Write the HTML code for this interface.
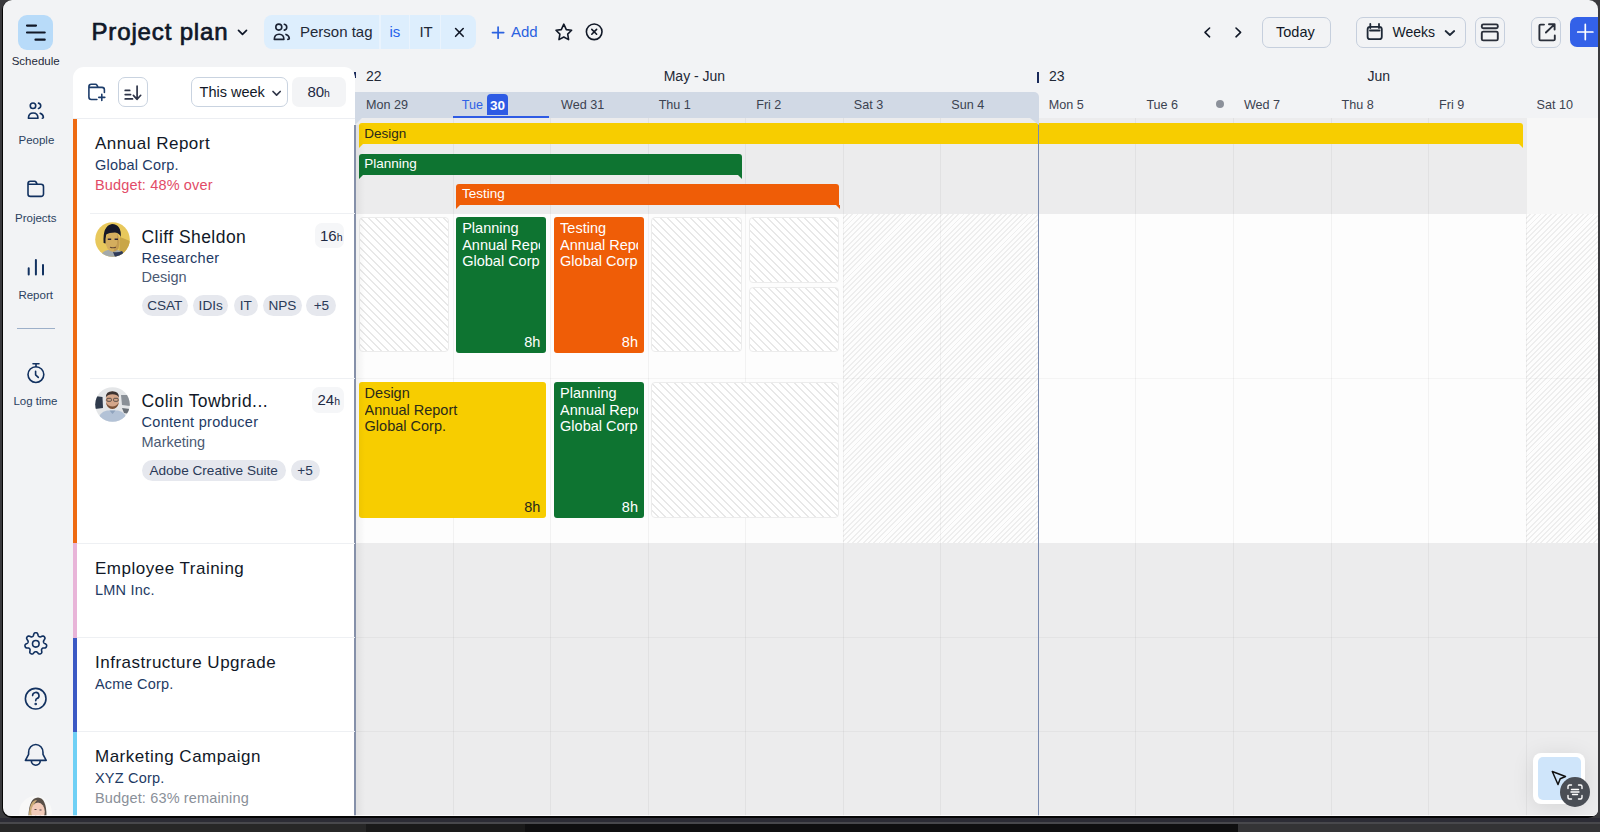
<!DOCTYPE html><html><head><meta charset="utf-8"><style>
*{margin:0;padding:0;box-sizing:border-box}
html,body{width:1600px;height:832px;overflow:hidden;background:#2c2c2e;font-family:"Liberation Sans", sans-serif}
.abs{position:absolute}
#frame{position:absolute;left:3px;top:0;width:1594.5px;height:816px;background:#f2f3f5;border-radius:9px 9px 6px 8px;overflow:hidden}
.t{position:absolute;white-space:nowrap;line-height:1}
</style></head><body><div class="abs" style="left:0;top:0;width:1600px;height:832px;background:#3a3a3d"></div>
<div class="abs" style="left:2px;top:0;width:1596px;height:818px;background:#050505;border-radius:10px"></div>
<div class="abs" style="left:0;top:818px;width:1600px;height:4px;background:#2c2c35"></div>
<div class="abs" style="left:0;top:822px;width:1600px;height:2px;background:#48484c"></div>
<div class="abs" style="left:0;top:824px;width:366px;height:8px;background:#272727"></div>
<div class="abs" style="left:366px;top:824px;width:159px;height:8px;background:#1a1a1a"></div>
<div class="abs" style="left:525px;top:824px;width:713px;height:8px;background:#0f0f10"></div>
<div class="abs" style="left:1238px;top:824px;width:362px;height:8px;background:#343436"></div>
<div id="frame">
<div class="abs" style="left:-3px;top:0;width:1600px;height:816px">
<div class="abs" style="left:355px;top:118px;width:1245px;height:95.5px;background:#ececed"></div>
<div class="abs" style="left:355px;top:213.5px;width:1245px;height:164.5px;background:#fdfdfd"></div>
<div class="abs" style="left:355px;top:378px;width:1245px;height:165px;background:#fdfdfd"></div>
<div class="abs" style="left:355px;top:543px;width:1245px;height:94.5px;background:#ececed"></div>
<div class="abs" style="left:355px;top:637.5px;width:1245px;height:94.0px;background:#ececed"></div>
<div class="abs" style="left:355px;top:731.5px;width:1245px;height:84.5px;background:#ececed"></div>
<div class="abs" style="left:1526.1px;top:118px;width:80px;height:95.5px;background:#f7f7f7"></div>
<div class="abs" style="left:843.25px;top:213.5px;width:195.0999999999999px;height:329.5px;background:repeating-linear-gradient(135deg, transparent 0 2.4px, #eeeeee 2.4px 3.75px)"></div>
<div class="abs" style="left:1526.1px;top:213.5px;width:73.90000000000009px;height:329.5px;background:repeating-linear-gradient(135deg, transparent 0 2.4px, #eeeeee 2.4px 3.75px)"></div>
<div class="abs" style="left:452.55px;top:118px;width:1px;height:698px;background:rgba(0,0,0,0.045)"></div>
<div class="abs" style="left:550.1px;top:118px;width:1px;height:698px;background:rgba(0,0,0,0.045)"></div>
<div class="abs" style="left:647.65px;top:118px;width:1px;height:698px;background:rgba(0,0,0,0.045)"></div>
<div class="abs" style="left:745.2px;top:118px;width:1px;height:698px;background:rgba(0,0,0,0.045)"></div>
<div class="abs" style="left:842.75px;top:118px;width:1px;height:698px;background:rgba(0,0,0,0.045)"></div>
<div class="abs" style="left:940.3px;top:118px;width:1px;height:698px;background:rgba(0,0,0,0.045)"></div>
<div class="abs" style="left:1037.85px;top:118px;width:1px;height:698px;background:rgba(0,0,0,0.045)"></div>
<div class="abs" style="left:1135.4px;top:118px;width:1px;height:698px;background:rgba(0,0,0,0.045)"></div>
<div class="abs" style="left:1232.9499999999998px;top:118px;width:1px;height:698px;background:rgba(0,0,0,0.045)"></div>
<div class="abs" style="left:1330.5px;top:118px;width:1px;height:698px;background:rgba(0,0,0,0.045)"></div>
<div class="abs" style="left:1428.05px;top:118px;width:1px;height:698px;background:rgba(0,0,0,0.045)"></div>
<div class="abs" style="left:1525.6px;top:118px;width:1px;height:698px;background:rgba(0,0,0,0.045)"></div>
<div class="abs" style="left:355px;top:377.5px;width:1245px;height:1px;background:rgba(0,0,0,0.035)"></div>
<div class="abs" style="left:355px;top:637.0px;width:1245px;height:1px;background:rgba(0,0,0,0.035)"></div>
<div class="abs" style="left:355px;top:731.0px;width:1245px;height:1px;background:rgba(0,0,0,0.035)"></div>
<div class="abs" style="left:358.7px;top:123.4px;width:1164.3px;height:21px;background:#f7cd00;border-radius:3px 3px 0 0"></div>
<div class="abs" style="left:358.7px;top:144.4px;width:0;height:0;border-top:4px solid #f7cd00;border-right:4px solid transparent"></div>
<div class="abs" style="left:1519px;top:144.4px;width:0;height:0;border-top:4px solid #f7cd00;border-left:4px solid transparent"></div>
<div class="t" style="left:364.2px;top:126.7px;font-size:13.5px;color:#2a2a1a">Design</div>
<div class="abs" style="left:358.7px;top:153.7px;width:382.90000000000003px;height:21px;background:#0e7431;border-radius:3px 3px 0 0"></div>
<div class="abs" style="left:358.7px;top:174.7px;width:0;height:0;border-top:4px solid #0e7431;border-right:4px solid transparent"></div>
<div class="abs" style="left:737.6px;top:174.7px;width:0;height:0;border-top:4px solid #0e7431;border-left:4px solid transparent"></div>
<div class="t" style="left:364.2px;top:157.0px;font-size:13.5px;color:#ffffff">Planning</div>
<div class="abs" style="left:456.4px;top:184.1px;width:383.1px;height:21px;background:#ef5d07;border-radius:3px 3px 0 0"></div>
<div class="abs" style="left:456.4px;top:205.1px;width:0;height:0;border-top:4px solid #ef5d07;border-right:4px solid transparent"></div>
<div class="abs" style="left:835.5px;top:205.1px;width:0;height:0;border-top:4px solid #ef5d07;border-left:4px solid transparent"></div>
<div class="t" style="left:461.9px;top:187.4px;font-size:13.5px;color:#ffffff">Testing</div>
<div class="abs" style="left:358.6px;top:217px;width:90.89999999999998px;height:135.2px;border:1px solid #ececec;border-radius:4px;background:repeating-linear-gradient(45deg, transparent 0 3.8px, #e8e8e8 3.8px 5.3px),#fff"></div>
<div class="abs" style="left:651.2px;top:217px;width:90.5px;height:135.2px;border:1px solid #ececec;border-radius:4px;background:repeating-linear-gradient(45deg, transparent 0 3.8px, #e8e8e8 3.8px 5.3px),#fff"></div>
<div class="abs" style="left:749.3px;top:217px;width:89.90000000000009px;height:65.5px;border:1px solid #ececec;border-radius:4px;background:repeating-linear-gradient(45deg, transparent 0 3.8px, #e8e8e8 3.8px 5.3px),#fff"></div>
<div class="abs" style="left:749.3px;top:286.6px;width:89.90000000000009px;height:65.59999999999997px;border:1px solid #ececec;border-radius:4px;background:repeating-linear-gradient(45deg, transparent 0 3.8px, #e8e8e8 3.8px 5.3px),#fff"></div>
<div class="abs" style="left:651.2px;top:382px;width:188.0px;height:135.79999999999995px;border:1px solid #ececec;border-radius:4px;background:repeating-linear-gradient(45deg, transparent 0 3.8px, #e8e8e8 3.8px 5.3px),#fff"></div>
<div class="abs" style="left:456.2px;top:217px;width:90.19999999999999px;height:135.60000000000002px;background:#0e7431;border-radius:3px;overflow:hidden">
<div class="abs" style="left:6px;top:3px;right:6px;overflow:hidden;font-size:14.5px;line-height:16.5px;color:#ffffff;white-space:nowrap">Planning<br>Annual Report<br>Global Corp.</div>
<div class="abs" style="right:6px;bottom:3.5px;font-size:14.5px;line-height:1;color:#ffffff">8h</div>
</div>
<div class="abs" style="left:554.1px;top:217px;width:89.89999999999998px;height:135.60000000000002px;background:#ef5d07;border-radius:3px;overflow:hidden">
<div class="abs" style="left:6px;top:3px;right:6px;overflow:hidden;font-size:14.5px;line-height:16.5px;color:#ffffff;white-space:nowrap">Testing<br>Annual Report<br>Global Corp.</div>
<div class="abs" style="right:6px;bottom:3.5px;font-size:14.5px;line-height:1;color:#ffffff">8h</div>
</div>
<div class="abs" style="left:358.6px;top:382px;width:187.79999999999995px;height:135.79999999999995px;background:#f7cd00;border-radius:3px;overflow:hidden">
<div class="abs" style="left:6px;top:3px;right:6px;overflow:hidden;font-size:14.5px;line-height:16.5px;color:#2a2a1a;white-space:nowrap">Design<br>Annual Report<br>Global Corp.</div>
<div class="abs" style="right:6px;bottom:3.5px;font-size:14.5px;line-height:1;color:#2a2a1a">8h</div>
</div>
<div class="abs" style="left:554.1px;top:382px;width:89.89999999999998px;height:135.79999999999995px;background:#0e7431;border-radius:3px;overflow:hidden">
<div class="abs" style="left:6px;top:3px;right:6px;overflow:hidden;font-size:14.5px;line-height:16.5px;color:#ffffff;white-space:nowrap">Planning<br>Annual Report<br>Global Corp.</div>
<div class="abs" style="right:6px;bottom:3.5px;font-size:14.5px;line-height:1;color:#ffffff">8h</div>
</div>
<div class="abs" style="left:354px;top:125px;width:2px;height:691px;background:#7a8bab"></div>
<div class="abs" style="left:1037.55px;top:124px;width:1.5px;height:692px;background:#7a8bb0"></div>
<div class="abs" style="left:355.2px;top:92.2px;width:683.9499999999999px;height:25.5px;background:#d1d9e5;border-radius:0 5px 0 0"></div>
<div class="abs" style="left:1030.1499999999999px;top:117.7px;width:0;height:0;border-top:7px solid #d1d9e5;border-left:9px solid transparent"></div>
<div class="abs" style="left:355.2px;top:117.7px;width:0;height:0;border-top:7px solid #d1d9e5;border-right:7px solid transparent"></div>
<div class="t" style="left:366.0px;top:99.2px;font-size:12.6px;color:#3b4250">Mon 29</div>
<div class="t" style="left:461.75px;top:99.2px;font-size:12.6px;color:#2f62e6">Tue</div>
<div class="abs" style="left:486.8px;top:93.8px;width:21.2px;height:21.5px;background:#2e5be4;border-radius:4px 4px 0 0"></div>
<div class="t" style="left:486.8px;width:21.2px;text-align:center;top:98.5px;font-size:13.5px;color:#fff;font-weight:bold">30</div>
<div class="abs" style="left:453.3px;top:116px;width:96.1px;height:2px;background:#2e5be4"></div>
<div class="t" style="left:561.1px;top:99.2px;font-size:12.6px;color:#3b4250">Wed 31</div>
<div class="t" style="left:658.65px;top:99.2px;font-size:12.6px;color:#3b4250">Thu 1</div>
<div class="t" style="left:756.2px;top:99.2px;font-size:12.6px;color:#3b4250">Fri 2</div>
<div class="t" style="left:853.75px;top:99.2px;font-size:12.6px;color:#3b4250">Sat 3</div>
<div class="t" style="left:951.3px;top:99.2px;font-size:12.6px;color:#3b4250">Sun 4</div>
<div class="t" style="left:1048.85px;top:99.2px;font-size:12.6px;color:#3b4250">Mon 5</div>
<div class="t" style="left:1146.4px;top:99.2px;font-size:12.6px;color:#3b4250">Tue 6</div>
<div class="t" style="left:1243.9499999999998px;top:99.2px;font-size:12.6px;color:#3b4250">Wed 7</div>
<div class="t" style="left:1341.5px;top:99.2px;font-size:12.6px;color:#3b4250">Thu 8</div>
<div class="t" style="left:1439.05px;top:99.2px;font-size:12.6px;color:#3b4250">Fri 9</div>
<div class="t" style="left:1536.6px;top:99.2px;font-size:12.6px;color:#3b4250">Sat 10</div>
<div class="abs" style="left:1216px;top:99.5px;width:8px;height:8px;border-radius:50%;background:#8c919a"></div>
<div class="abs" style="left:353.5px;top:72px;width:2px;height:6px;background:#1a2a5a"></div>
<div class="t" style="left:366px;top:69px;font-size:14px;color:#222836">22</div>
<div class="t" style="left:663.7px;top:69px;font-size:14px;color:#222836">May - Jun</div>
<div class="abs" style="left:1036.85px;top:72px;width:2px;height:10.6px;background:#1a2a5a"></div>
<div class="t" style="left:1049px;top:69px;font-size:14px;color:#222836">23</div>
<div class="t" style="left:1367.5px;top:69px;font-size:14px;color:#222836">Jun</div>
<div class="abs" style="left:1533px;top:752.5px;width:52px;height:51.5px;background:#fff;border-radius:8px;box-shadow:0 3px 22px rgba(0,0,0,0.10)"></div>
<div class="abs" style="left:1537.8px;top:756.8px;width:43.2px;height:43.3px;background:#cfe5fa;border-radius:5px"></div>
<svg class="abs" style="left:1548px;top:768px" width="24" height="24" viewBox="0 0 24 24"><path d="M4.3 3.5 L17.5 8.5 L12.2 10.8 L10 16.5 Z" fill="none" stroke="#111" stroke-width="1.5" stroke-linejoin="round"/></svg>
<div class="abs" style="left:1560px;top:777px;width:30px;height:30px;border-radius:50%;background:#4a4e55"></div>
<svg class="abs" style="left:1565px;top:782px" width="20" height="20" viewBox="0 0 20 20"><g fill="none" stroke="#fff" stroke-width="1.4" stroke-linecap="round"><path d="M3 6.5V4.5a1.5 1.5 0 0 1 1.5-1.5H6.5M13.5 3h2a1.5 1.5 0 0 1 1.5 1.5v2M17 13.5v2a1.5 1.5 0 0 1-1.5 1.5h-2M6.5 17h-2A1.5 1.5 0 0 1 3 15.5v-2"/><path d="M6.5 7.5h7M6 10h8M7.5 12.5h5"/></g></svg>
<div class="abs" style="left:18px;top:15px;width:35px;height:35px;border-radius:9px;background:#b8dbf9"></div>
<div class="t" style="left:11.7px;top:56.46px;font-size:11.5px;color:#1f2a3a;">Schedule</div>
<div class="t" style="left:18.5px;top:134.76px;font-size:11.5px;color:#2b3f60;">People</div>
<div class="t" style="left:15px;top:213.06px;font-size:11.5px;color:#2b3f60;">Projects</div>
<div class="t" style="left:18.4px;top:289.76px;font-size:11.5px;color:#2b3f60;">Report</div>
<div class="abs" style="left:17px;top:327.5px;width:37.5px;height:1.5px;background:#9db0c9"></div>
<div class="t" style="left:13.4px;top:395.86px;font-size:11.5px;color:#2b3f60;">Log time</div>
<div class="t" style="left:91.5px;top:20.08px;font-size:24px;color:#0f1728;-webkit-text-stroke:0.7px #0f1728;letter-spacing:0.85px">Project plan</div>
<div class="abs" style="left:264.4px;top:15px;width:211.6px;height:33.8px;border-radius:8px;background:#ddeefd;overflow:hidden"><div class="abs" style="left:115px;top:0;width:1.5px;height:34px;background:#e9f3fd"></div><div class="abs" style="left:144.5px;top:0;width:1.5px;height:34px;background:#e9f3fd"></div><div class="abs" style="left:175.6px;top:0;width:1.5px;height:34px;background:#e9f3fd"></div></div>
<div class="t" style="left:300px;top:24.20px;font-size:15px;color:#1f2937;">Person tag</div>
<div class="t" style="left:389.4px;top:24.20px;font-size:15px;color:#2563eb;">is</div>
<div class="t" style="left:419.4px;top:24.20px;font-size:15px;color:#1f2937;">IT</div>
<div class="t" style="left:511px;top:24.20px;font-size:15px;color:#2b62e0;">Add</div>
<div class="t" style="left:1276px;top:24.62px;font-size:14.5px;color:#111827;">Today</div>
<div class="abs" style="left:1262px;top:17px;width:69px;height:30.5px;border:1.3px solid #c6cfdd;border-radius:7px"></div>
<div class="abs" style="left:1356.2px;top:17px;width:109.4px;height:30.5px;border:1.3px solid #c6cfdd;border-radius:7px"></div>
<div class="t" style="left:1392.5px;top:24.55px;font-size:14px;color:#111827;">Weeks</div>
<div class="abs" style="left:1474.5px;top:17px;width:30.5px;height:30.5px;border:1.3px solid #c6cfdd;border-radius:7px"></div>
<div class="abs" style="left:1531px;top:17px;width:30px;height:30.5px;border:1.3px solid #c6cfdd;border-radius:7px"></div>
<div class="abs" style="left:1570.4px;top:17px;width:40px;height:30px;border-radius:7px;background:#3361e8"></div>
<div class="abs" style="left:73px;top:67px;width:281.5px;height:760px;background:#fff;border-radius:11px 11px 0 0"></div>
<div class="abs" style="left:354px;top:125px;width:2px;height:691px;background:#8590a9"></div>
<div class="abs" style="left:356px;top:125px;width:9px;height:691px;background:linear-gradient(90deg,rgba(0,0,0,0.05),rgba(0,0,0,0))"></div>
<div class="abs" style="left:117.5px;top:77px;width:30.2px;height:30px;border:1.3px solid #c9d3e0;border-radius:7px"></div>
<div class="abs" style="left:190.5px;top:77.2px;width:97px;height:30px;border:1.3px solid #c9d3e0;border-radius:7px"></div>
<div class="t" style="left:199.6px;top:84.92px;font-size:14.5px;color:#111827;">This week</div>
<div class="abs" style="left:292px;top:76.7px;width:54px;height:30px;border-radius:7px;background:#f3f4f6"></div>
<div class="t" style="left:307.4px;top:83.70px;font-size:15px;color:#1e2a44;">80<span style="font-size:10.5px">h</span></div>
<div class="abs" style="left:73px;top:118px;width:281.5px;height:1px;background:#eceef2"></div>
<div class="abs" style="left:73px;top:119px;width:4px;height:424px;background:#ee6a12"></div>
<div class="abs" style="left:73px;top:543px;width:4px;height:94.5px;background:#e8b4d8"></div>
<div class="abs" style="left:73px;top:637.5px;width:4px;height:94.0px;background:#3b59c4"></div>
<div class="abs" style="left:73px;top:731.5px;width:4px;height:84.5px;background:#6fd0f5"></div>
<div class="abs" style="left:90px;top:213px;width:264.5px;height:1px;background:#eef0f3"></div>
<div class="abs" style="left:90px;top:377.6px;width:264.5px;height:1px;background:#eef0f3"></div>
<div class="abs" style="left:77px;top:542.5px;width:277.5px;height:1px;background:#eef0f3"></div>
<div class="abs" style="left:77px;top:637px;width:277.5px;height:1px;background:#eef0f3"></div>
<div class="abs" style="left:77px;top:731px;width:277.5px;height:1px;background:#eef0f3"></div>
<div class="t" style="left:95px;top:134.61px;font-size:17px;color:#111827;letter-spacing:0.5px">Annual Report</div>
<div class="t" style="left:95px;top:157.72px;font-size:14.5px;color:#1e3a64;letter-spacing:0.2px">Global Corp.</div>
<div class="t" style="left:95px;top:177.72px;font-size:14.5px;color:#e24b67;letter-spacing:0.15px">Budget: 48% over</div>
<div class="t" style="left:95px;top:559.61px;font-size:17px;color:#111827;letter-spacing:0.5px">Employee Training</div>
<div class="t" style="left:95px;top:582.72px;font-size:14.5px;color:#1e3a64;letter-spacing:0.2px">LMN Inc.</div>
<div class="t" style="left:95px;top:654.11px;font-size:17px;color:#111827;letter-spacing:0.5px">Infrastructure Upgrade</div>
<div class="t" style="left:95px;top:677.22px;font-size:14.5px;color:#1e3a64;letter-spacing:0.2px">Acme Corp.</div>
<div class="t" style="left:95px;top:748.11px;font-size:17px;color:#111827;letter-spacing:0.5px">Marketing Campaign</div>
<div class="t" style="left:95px;top:771.22px;font-size:14.5px;color:#1e3a64;letter-spacing:0.2px">XYZ Corp.</div>
<div class="t" style="left:95px;top:791.22px;font-size:14.5px;color:#8a9099;letter-spacing:0.15px">Budget: 63% remaining</div>
<div class="t" style="left:141.5px;top:228.88px;font-size:17.5px;color:#111827;letter-spacing:0.45px">Cliff Sheldon</div>
<div class="t" style="left:141.5px;top:250.82px;font-size:14.5px;color:#1e3a64;letter-spacing:0.3px">Researcher</div>
<div class="t" style="left:141.5px;top:270.22px;font-size:14.5px;color:#4b5a73;">Design</div>
<div class="abs" style="left:314.5px;top:222.5px;width:29.5px;height:25.5px;border-radius:7px;background:#f5f6f8"></div>
<div class="t" style="left:320.0px;top:227.80px;font-size:15px;color:#1e2a44;">16<span style="font-size:10.5px">h</span></div>
<div class="abs" style="left:141.5px;top:295.2px;width:46.5px;height:21px;border-radius:11px;background:#e6e8ee"></div>
<div class="t" style="left:141.5px;top:295.2px;width:46.5px;height:21px;line-height:21px;text-align:center;font-size:13.6px;color:#2a3a58">CSAT</div>
<div class="abs" style="left:193px;top:295.2px;width:35.400000000000006px;height:21px;border-radius:11px;background:#e6e8ee"></div>
<div class="t" style="left:193px;top:295.2px;width:35.400000000000006px;height:21px;line-height:21px;text-align:center;font-size:13.6px;color:#2a3a58">IDIs</div>
<div class="abs" style="left:233.5px;top:295.2px;width:24.5px;height:21px;border-radius:11px;background:#e6e8ee"></div>
<div class="t" style="left:233.5px;top:295.2px;width:24.5px;height:21px;line-height:21px;text-align:center;font-size:13.6px;color:#2a3a58">IT</div>
<div class="abs" style="left:263px;top:295.2px;width:38.80000000000001px;height:21px;border-radius:11px;background:#e6e8ee"></div>
<div class="t" style="left:263px;top:295.2px;width:38.80000000000001px;height:21px;line-height:21px;text-align:center;font-size:13.6px;color:#2a3a58">NPS</div>
<div class="abs" style="left:306.4px;top:295.2px;width:30.0px;height:21px;border-radius:11px;background:#e6e8ee"></div>
<div class="t" style="left:306.4px;top:295.2px;width:30.0px;height:21px;line-height:21px;text-align:center;font-size:13.6px;color:#2a3a58">+5</div>
<div class="t" style="left:141.5px;top:393.38px;font-size:17.5px;color:#111827;letter-spacing:0.45px">Colin Towbrid...</div>
<div class="t" style="left:141.5px;top:415.32px;font-size:14.5px;color:#1e3a64;letter-spacing:0.3px">Content producer</div>
<div class="t" style="left:141.5px;top:434.72px;font-size:14.5px;color:#4b5a73;">Marketing</div>
<div class="abs" style="left:312px;top:387px;width:32px;height:25.5px;border-radius:7px;background:#f5f6f8"></div>
<div class="t" style="left:317.5px;top:392.30px;font-size:15px;color:#1e2a44;">24<span style="font-size:10.5px">h</span></div>
<div class="abs" style="left:141.5px;top:459.7px;width:144.3px;height:21px;border-radius:11px;background:#e6e8ee"></div>
<div class="t" style="left:141.5px;top:459.7px;width:144.3px;height:21px;line-height:21px;text-align:center;font-size:13.6px;color:#2a3a58">Adobe Creative Suite</div>
<div class="abs" style="left:290.5px;top:459.7px;width:29.100000000000023px;height:21px;border-radius:11px;background:#e6e8ee"></div>
<div class="t" style="left:290.5px;top:459.7px;width:29.100000000000023px;height:21px;line-height:21px;text-align:center;font-size:13.6px;color:#2a3a58">+5</div>
<svg class="abs" style="left:94.5px;top:221.7px" width="35" height="35" viewBox="0 0 35 35"><defs><clipPath id="c1"><circle cx="17.5" cy="17.5" r="17.3"/></clipPath></defs>
<g clip-path="url(#c1)"><rect width="35" height="35" fill="#e8c85c"/>
<path d="M25 15 L35 19 L35 35 L24 35Z" fill="#c9a646"/>
<path d="M5 35 Q7 29 13 28 L22 28 Q29 29 31 35Z" fill="#a3a9ab"/>
<path d="M18 30 Q23 31 27 29 L31 35 L20 35Z" fill="#2f3a58"/>
<ellipse cx="17.8" cy="19.5" rx="7.3" ry="10.3" fill="#d4ad5e"/>
<path d="M22 12 Q25.5 18 23.5 27 Q21 29.5 18 29.8 L22 22Z" fill="#b98f48" opacity="0.6"/>
<path d="M8.6 21 Q7.5 3.5 17 2 Q26.5 2.5 25.8 15 Q24.5 11 20 10.5 Q14 10.5 11.3 12.5 Q10.3 16 10.6 21.5Z" fill="#161828"/>
<path d="M12.8 17.3 H16.2 M19.6 17.3 H23" stroke="#2c2638" stroke-width="1.5"/>
<path d="M15 25.3 Q17.8 26.3 21 25.3" stroke="#6a4c36" stroke-width="1.1" fill="none"/>
</g></svg>
<svg class="abs" style="left:94.5px;top:386.6px" width="35" height="35" viewBox="0 0 35 35"><defs><clipPath id="c2"><circle cx="17.5" cy="17.5" r="17.3"/></clipPath></defs>
<g clip-path="url(#c2)"><rect width="35" height="35" fill="#e4e6e8"/>
<path d="M0 9 L7.5 10 L8 21 L0 22Z" fill="#2f3a4c"/><path d="M26 8 L35 8 L35 19 L27 18Z" fill="#8a9097"/><path d="M27 21 L35 22 L35 27 L29 26Z" fill="#6a7077"/>
<path d="M2 35 Q4 25 12 23.5 L23 23.5 Q31 25 33 35Z" fill="#b3c2d6"/>
<path d="M14.5 23.5 L17.5 27 L20.5 23.5Z" fill="#8fa3bd"/>
<ellipse cx="17.4" cy="13.2" rx="6.6" ry="8.6" fill="#d4a68a"/>
<path d="M10.8 10.5 Q10.8 4.2 17.4 4.2 Q24 4.2 24 10.5 Q22 7.3 17.4 7.3 Q12.8 7.3 10.8 10.5Z" fill="#3b3230"/>
<path d="M11 15.5 Q12 22 17.4 22 Q22.8 22 23.8 15.5 Q21.5 19.5 17.4 19.5 Q13.3 19.5 11 15.5Z" fill="#7a5238"/>
<rect x="11.8" y="11.3" width="4.6" height="3" rx="1" fill="none" stroke="#3a3a3a" stroke-width="0.8"/>
<rect x="18.6" y="11.3" width="4.6" height="3" rx="1" fill="none" stroke="#3a3a3a" stroke-width="0.8"/>
</g></svg>
<svg class="abs" style="left:19px;top:795.5px" width="33" height="33" viewBox="0 0 33 33"><defs><clipPath id="c3"><circle cx="16.5" cy="16.5" r="16.4"/></clipPath></defs>
<g clip-path="url(#c3)"><rect width="33" height="33" fill="#f8f8f8"/>
<path d="M9.5 24 Q9 2 19 1.5 Q27.5 2 27.5 20 L27.5 30 L9.5 30Z" fill="#5a5048"/>
<path d="M9.8 20 Q10.5 4 18 4 Q13 9 12.5 24Z" fill="#c7a874"/>
<ellipse cx="19" cy="15.5" rx="6.8" ry="9" fill="#f2cbb9"/>
<path d="M15.5 13.5 H17.5 M20.5 14 H22.5" stroke="#5a4a50" stroke-width="1.1"/>
<path d="M16 19.5 Q19 21.5 22 19.5" stroke="#b07070" stroke-width="1.2" fill="none"/>
</g></svg>
<svg class="abs" style="left:0;top:0" width="1600" height="832" viewBox="0 0 1600 832" fill="none" stroke-linecap="round" stroke-linejoin="round">
<g stroke="#111827" stroke-width="2.2"><path d="M27 25.6H36M27 32.5H44.7M35.5 39.7H44.7"/></g>
<g stroke="#123160" stroke-width="1.6">
 <circle cx="33" cy="105.8" r="2.75"/>
 <path d="M38.5 103.1A2.75 2.75 0 0 1 38.5 108.5"/>
 <path d="M28.4 118.2Q28.6 113 33.2 113Q37.8 113 38 118.2Z"/>
 <path d="M40.2 113.3Q43.4 114.5 43.4 117.6Q43.4 118.2 42.3 118.2"/>
 <path d="M28 186V183.6A2.4 2.4 0 0 1 30.4 181.2H34.6A1.6 1.6 0 0 1 36 182L37.3 184.3H41A2.5 2.5 0 0 1 43.5 186.8V194A2.4 2.4 0 0 1 41.1 196.4H30.4A2.4 2.4 0 0 1 28 194Z M28 184.3H37.3"/>
</g>
<g stroke="#123160" stroke-width="2"><path d="M28.7 268.3V274.5M35.9 260V274.5M43 265V274.5"/></g>
<g stroke="#123160" stroke-width="1.6">
 <circle cx="35.9" cy="374.6" r="7.9"/>
 <path d="M33 363.8H39M36 363.8V366.6M35.6 371.2V374.8L38.3 377.4"/>
 <path d="M35.80 632.75 L36.38 632.79 L36.94 632.96 L37.45 633.39 L37.83 634.24 L38.09 635.26 L38.35 635.94 L38.68 636.30 L39.04 636.53 L39.41 636.71 L39.81 636.86 L40.27 636.91 L40.93 636.74 L41.87 636.31 L42.80 636.03 L43.48 636.12 L43.98 636.43 L44.39 636.85 L44.72 637.32 L44.96 637.85 L44.99 638.49 L44.63 639.30 L43.99 640.16 L43.57 640.82 L43.46 641.31 L43.49 641.74 L43.58 642.15 L43.70 642.55 L43.93 642.95 L44.42 643.35 L45.30 643.80 L46.16 644.34 L46.57 644.93 L46.66 645.52 L46.61 646.10 L46.46 646.66 L46.21 647.18 L45.77 647.63 L44.97 647.88 L43.90 647.93 L43.06 647.99 L42.57 648.20 L42.25 648.49 L41.98 648.80 L41.74 649.15 L41.55 649.55 L41.51 650.14 L41.69 651.07 L41.84 652.11 L41.67 652.85 L41.29 653.31 L40.81 653.64 L40.29 653.89 L39.73 654.04 L39.12 654.01 L38.43 653.61 L37.72 652.82 L37.12 652.15 L36.65 651.86 L36.22 651.77 L35.80 651.75 L35.38 651.77 L34.95 651.86 L34.48 652.15 L33.88 652.82 L33.17 653.61 L32.48 654.01 L31.87 654.04 L31.31 653.89 L30.79 653.64 L30.31 653.31 L29.93 652.85 L29.76 652.11 L29.91 651.07 L30.09 650.14 L30.05 649.55 L29.86 649.15 L29.62 648.80 L29.35 648.49 L29.03 648.20 L28.54 647.99 L27.70 647.93 L26.63 647.88 L25.83 647.63 L25.39 647.18 L25.14 646.66 L24.99 646.10 L24.94 645.52 L25.03 644.93 L25.44 644.34 L26.30 643.80 L27.18 643.35 L27.67 642.95 L27.90 642.55 L28.02 642.15 L28.11 641.74 L28.14 641.31 L28.03 640.82 L27.61 640.16 L26.97 639.30 L26.61 638.49 L26.64 637.85 L26.88 637.32 L27.21 636.85 L27.62 636.43 L28.12 636.12 L28.80 636.03 L29.73 636.31 L30.67 636.74 L31.33 636.91 L31.79 636.86 L32.19 636.71 L32.56 636.53 L32.92 636.30 L33.25 635.94 L33.51 635.26 L33.77 634.24 L34.15 633.39 L34.66 632.96 L35.22 632.79 L35.80 632.75Z"/>
 <circle cx="35.8" cy="643.8" r="3.3"/>
 <circle cx="35.7" cy="698.7" r="10.3"/>
 <path d="M32.6 695.6A3.2 3.2 0 1 1 37 698.6C36 699 35.7 699.6 35.7 700.8"/>
 <circle cx="35.7" cy="704" r="0.5" fill="#123160"/>
 <path d="M25.4 760.4L28.6 754.3V752.4A7.2 7.9 0 0 1 43 752.4V754.3L46.2 760.4Z M31.4 760.9A4.4 4.3 0 0 0 40.2 760.9"/>
</g>
<g stroke="#0f1728" stroke-width="1.7"><path d="M238.5 30.3L242.5 34.3L246.5 30.3"/></g>
<g stroke="#1a2233" stroke-width="1.6">
 <circle cx="278.8" cy="27.1" r="3"/>
 <path d="M284.3 24.2A3 3 0 0 1 284.3 30.1"/>
 <path d="M274.3 39.4Q274.3 34.2 279.1 34.2Q283.9 34.2 283.9 39.4Z"/>
 <path d="M286 34.4Q289.3 35.5 289.3 38.6Q289.3 39.4 287.8 39.4"/>
</g>
<g stroke="#111827" stroke-width="1.6">
 <path d="M455.6 28.5L463.2 36.3M463.2 28.5L455.6 36.3"/>
 <path d="M563.8 24.2L566.3 29.6L571.6 30.3L567.7 34.1L568.6 39.6L563.8 37L559 39.6L559.9 34.1L556 30.3L561.3 29.6Z"/>
 <circle cx="594.2" cy="31.8" r="7.8"/>
 <path d="M591.8 29.4L596.6 34.2M596.6 29.4L591.8 34.2"/>
 <path d="M1209.6 28L1205 32.4L1209.6 36.8M1236 28L1240.6 32.4L1236 36.8"/>
</g>
<g stroke="#2b62e0" stroke-width="1.7"><path d="M498.1 27V38.2M492.5 32.6H503.7"/></g>
<g stroke="#1f2937" stroke-width="1.8">
 <rect x="1367.6" y="26.8" width="14.2" height="12.4" rx="2.5"/>
 <path d="M1370 30.5H1379.6M1370.3 24V28M1379 24V28"/>
 <path d="M1445.6 31L1449.9 35L1454.2 31"/>
</g>
<g stroke="#2a2f3a" stroke-width="1.9">
 <rect x="1481.8" y="24.4" width="16" height="3.8" rx="1.5"/>
 <rect x="1481.8" y="31.6" width="16" height="8.8" rx="1.5"/>
 <path d="M1544 24.6H1540.6A1.2 1.2 0 0 0 1539.4 25.8V39.2A1.2 1.2 0 0 0 1540.6 40.4H1553.6A1.2 1.2 0 0 0 1554.8 39.2V35.5M1545.9 32.5L1554.2 24.6M1549 24.3H1554.6V29.6"/>
</g>
<g stroke="#ffffff" stroke-width="1.7"><path d="M1585.3 24.4V39.6M1577.7 32H1592.9"/></g>
<g stroke="#1d3d6b" stroke-width="1.6">
 <path d="M88.9 92V86.7A2.4 2.4 0 0 1 91.3 84.3H95.5A1.6 1.6 0 0 1 96.9 85.1L98.2 87.4H102A2.4 2.4 0 0 1 104.4 89.8V92.5M88.9 87.4H98.2M88.9 92V97.1A2.4 2.4 0 0 0 91.3 99.5H96.9M101.8 94.4V100.4M98.8 97.4H104.8"/>
</g>
<g stroke="#2f3548" stroke-width="1.7">
 <path d="M125.2 90.4H129.7M125.2 94.6H130.6M125.2 98.9H132.5M137.1 86.2V99.3M133.4 95.3L137.1 99.3L140.7 95.3"/>
 <path d="M273 91.5L276.6 95.1L280.2 91.5"/>
</g>
</svg>
<div class="abs" style="left:0;top:815px;width:1600px;height:1px;background:rgba(255,255,255,0.7)"></div>
</div>
</div></body></html>
